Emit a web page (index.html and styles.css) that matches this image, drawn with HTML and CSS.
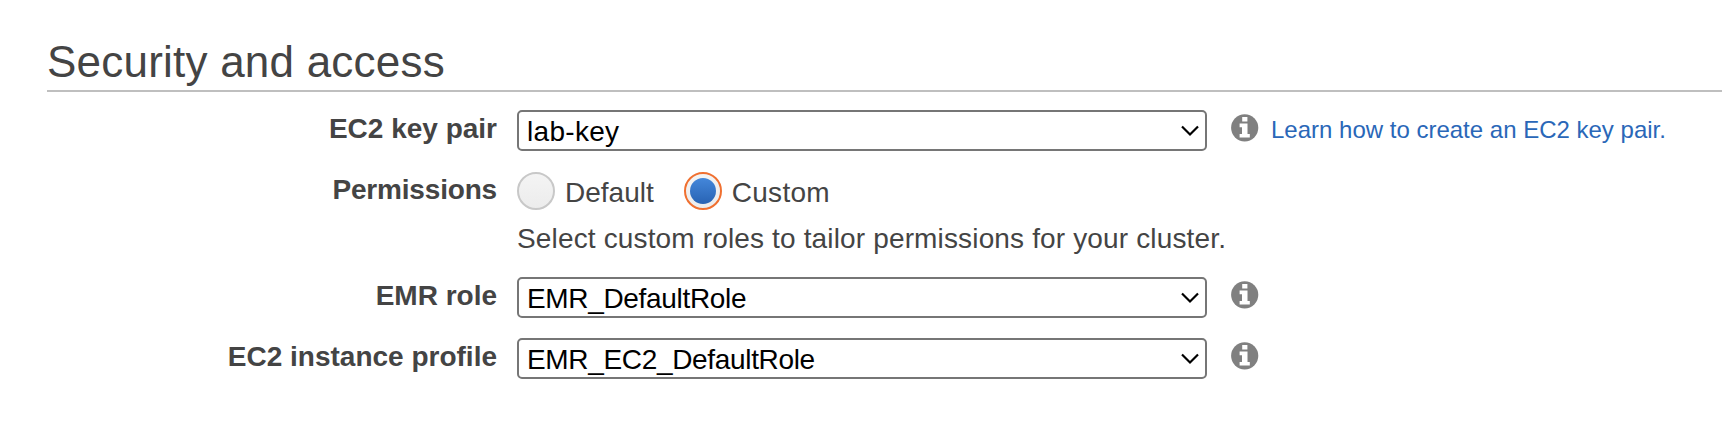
FILE: index.html
```html
<!DOCTYPE html>
<html lang="en">
<head>
<meta charset="utf-8">
<title>Security and access</title>
<link rel="stylesheet" href="styles.css">
</head>
<body>
<svg width="0" height="0" class="defs" aria-hidden="true">
  <symbol id="info" viewBox="0 0 28 28">
    <circle cx="13.7" cy="13.8" r="13.6" fill="#808080"/>
    <path fill="#fff" d="M11.2 3h5.2v4.6h-5.2zM8.6 9.5h7.9v10.4h2.3v3.6H8.6v-3.6h2.4v-6.7H8.6z"/>
  </symbol>
  <symbol id="chevron" viewBox="0 0 18 12">
    <path d="M1 1.5l8 8 8-8" fill="none" stroke="#000" stroke-width="2.2"/>
  </symbol>
</svg>
<main class="panel">
  <h1 class="title">Security and access</h1>
  <div class="row">
    <div class="label">EC2 key pair</div>
    <div class="select"><span class="loose">lab-key</span><svg class="chevron"><use href="#chevron"/></svg></div>
    <svg class="info"><use href="#info"/></svg>
    <a class="link">Learn how to create an EC2 key pair.</a>
  </div>
  <div class="row">
    <div class="label snug">Permissions</div>
    <div class="options">
      <label class="option"><span class="radio"></span><span>Default</span></label>
      <label class="option"><span class="radio checked"></span><span class="loose">Custom</span></label>
    </div>
  </div>
  <p class="hint">Select custom roles to tailor permissions for your cluster.</p>
  <div class="row">
    <div class="label">EMR role</div>
    <div class="select"><span class="tight">EMR_DefaultRole</span><svg class="chevron"><use href="#chevron"/></svg></div>
    <svg class="info"><use href="#info"/></svg>
  </div>
  <div class="row">
    <div class="label">EC2 instance profile</div>
    <div class="select"><span class="tight">EMR_EC2_DefaultRole</span><svg class="chevron"><use href="#chevron"/></svg></div>
    <svg class="info"><use href="#info"/></svg>
  </div>
</main>
</body>
</html>
```
FILE: styles.css
```css
* { box-sizing: border-box; }
body {
  margin: 0;
  background: #fff;
  color: #444;
  font: 28px/32px "Liberation Sans", Arial, sans-serif;
  overflow: hidden;
}
.defs { display: block; }
.panel { padding: 37px 0 0 47px; }
.title {
  margin: 0 0 18px;
  height: 55px;
  border-bottom: 2px solid #bfbfbf;
  font-size: 44px;
  line-height: 50px;
  font-weight: 400;
  letter-spacing: 0.22px;
}
.row {
  display: flex;
  align-items: flex-start;
  height: 41px;
  margin-bottom: 20px;
  white-space: nowrap;
}
.label {
  width: 450px;
  margin-right: 20px;
  padding-top: 3px;
  text-align: right;
  font-weight: 700;
}
.snug { letter-spacing: -0.18px; }
.loose { letter-spacing: 0.3px; }
.tight { letter-spacing: -0.33px; }
.select {
  display: flex;
  justify-content: space-between;
  width: 690px;
  height: 41px;
  padding: 4px 6px 0 8px;
  border: 2px solid #767676;
  border-radius: 5px;
  color: #000;
}
.chevron { width: 18px; height: 12px; margin-top: 9px; }
.info { width: 28px; height: 28px; margin: 4px 12px 0 24px; }
.link {
  padding-top: 6px;
  font-size: 24px;
  line-height: 28px;
  color: #2a67b8;
}
.options { display: flex; gap: 30px; padding-top: 1px; }
.option { display: flex; gap: 10px; line-height: 42px; }
.radio {
  display: flex;
  width: 38px;
  height: 38px;
  border: 2px solid #c8c8c8;
  border-radius: 50%;
  background: linear-gradient(#f4f4f4, #ececec);
}
.radio.checked { border-color: #f07030; }
.radio.checked::before {
  content: "";
  width: 26px;
  height: 26px;
  margin: 4px;
  border-radius: 50%;
  background: linear-gradient(#4487da, #2863b3);
}
.hint {
  margin: -9px 0 22px 470px;
  height: 32px;
  white-space: nowrap;
  letter-spacing: 0.15px;
}
```
